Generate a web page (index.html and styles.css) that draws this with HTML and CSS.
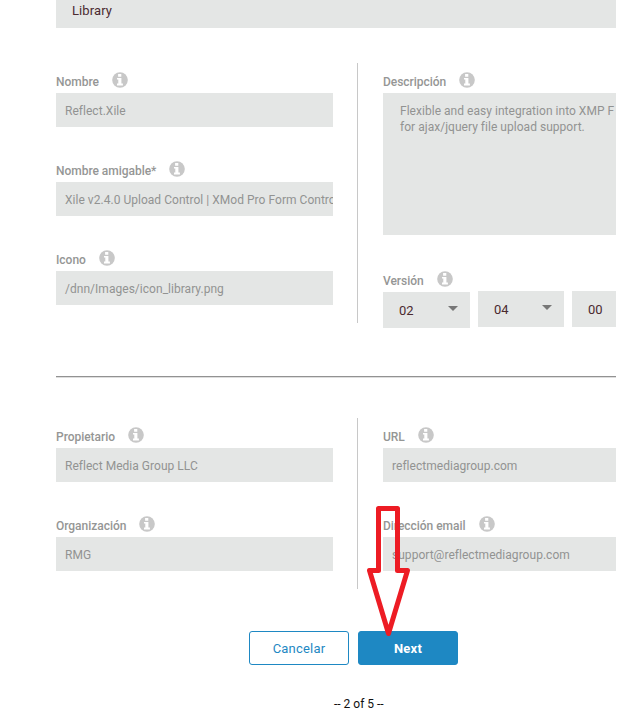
FILE: index.html
```html
<!DOCTYPE html>
<html lang="es">
<head>
<meta charset="utf-8">
<title>Library</title>
<link rel="stylesheet" href="styles.css">
</head>
<body>
<svg class="defs" width="0" height="0" aria-hidden="true">
  <symbol id="info" viewBox="0 0 16 16"><circle cx="8" cy="8" r="7.8" fill="#c8c8c8"/><path fill="#fff" d="M6.1 1.9h3.2v2.9H6.1zM5 5.9h4.4v5.6h1.5v1.9H5v-1.9h1.3V7.6H5z"/></symbol>
</svg>
<main class="page">
  <div class="type">Library</div>
  <section class="section">
    <div class="col left">
      <div class="field"><div class="label"><span>Nombre</span><svg class="info"><use href="#info"/></svg></div><div class="input">Reflect.Xile</div></div>
      <div class="field"><div class="label"><span>Nombre amigable*</span><svg class="info"><use href="#info"/></svg></div><div class="input">Xile v2.4.0 Upload Control | XMod Pro Form Contro</div></div>
      <div class="field"><div class="label"><span>Icono</span><svg class="info"><use href="#info"/></svg></div><div class="input">/dnn/Images/icon_library.png</div></div>
    </div>
    <div class="col right">
      <div class="field description"><div class="label"><span>Descripción</span><svg class="info"><use href="#info"/></svg></div><div class="input area">Flexible and easy integration into XMP F<br>for ajax/jquery file upload support.</div></div>
      <div class="field"><div class="label"><span>Versión</span><svg class="info"><use href="#info"/></svg></div>
        <div class="versions"><div class="select first">02</div><div class="select">04</div><div class="select">00</div></div>
      </div>
    </div>
  </section>
  <hr class="rule">
  <section class="section owner">
    <div class="col left">
      <div class="field"><div class="label"><span>Propietario</span><svg class="info"><use href="#info"/></svg></div><div class="input">Reflect Media Group LLC</div></div>
      <div class="field"><div class="label"><span>Organización</span><svg class="info"><use href="#info"/></svg></div><div class="input">RMG</div></div>
    </div>
    <div class="col right">
      <div class="field"><div class="label"><span>URL</span><svg class="info"><use href="#info"/></svg></div><div class="input">reflectmediagroup.com</div></div>
      <div class="field"><div class="label"><span>Dirección email</span><svg class="info"><use href="#info"/></svg></div><div class="input">support@reflectmediagroup.com</div></div>
    </div>
  </section>
  <div class="actions"><div class="button">Cancelar</div><div class="button primary">Next</div></div>
  <div class="steps">-- 2 of 5 --</div>
</main>
<svg class="arrow" width="46" height="132" viewBox="0 0 46 132"><path d="M12.5 3.5h19v62h10L22.5 128.5 3.5 65.5h9z" fill="none" stroke="#ed1c24" stroke-width="5" stroke-linejoin="round"/></svg>
</body>
</html>
```
FILE: styles.css
```css
* { box-sizing: border-box; }
body { margin: 0; background: #fff; font-family: Roboto, sans-serif; font-size: 12px; position: relative; width: 625px; height: 728px; overflow: hidden; }
.defs { display: block; }
.page { width: 560px; margin-left: 56px; overflow: hidden; }
.type { height: 28px; padding-left: 16px; background: #e4e6e5; color: #4b2a30; font-size: 13px; line-height: 22px; letter-spacing: .1px; }
.section { display: flex; height: 260px; margin-top: 35px; }
.col { flex: none; display: flex; flex-direction: column; gap: 25px; }
.left { width: 302px; padding-right: 24px; border-right: 1px solid #c8c8c8; }
.right { width: 302px; padding-left: 25px; }
.label { display: flex; height: 30px; color: #959695; font-weight: 500; line-height: 38px; letter-spacing: -.03px; white-space: nowrap; }
.info { width: 16px; height: 16px; margin: 9px 0 0 13px; }
.input { height: 34px; padding: 0 0 0 9px; background: #e4e6e5; color: #929392; line-height: 36px; letter-spacing: .03px; white-space: nowrap; overflow: hidden; }
.area { height: 142px; padding: 10px 0 0 17px; line-height: 16px; }
.description { margin-bottom: 2px; }
.versions { display: flex; gap: 8px; }
.select { flex: none; display: flex; justify-content: space-between; width: 86px; height: 36px; margin-top: -1px; padding: 0 12px 0 16px; background: #e4e6e5; color: #4b2a30; font-size: 13px; line-height: 37px; }
.first { width: 87px; margin-top: 0; }
.select::after { content: ""; margin-top: 14px; width: 10px; height: 5px; background: #777; clip-path: polygon(0 0, 100% 0, 50% 100%); }
.rule { height: 2px; margin: 53px 0 0; border: 0; border-top: 1px solid #929292; background: #dedede; }
.owner { height: 171px; margin-top: 40px; }
.actions { display: flex; gap: 9px; margin: 42px 0 0 193px; }
.button { width: 100px; height: 34px; border: 1px solid #1e88c3; border-radius: 3px; color: #1e88c3; font-size: 13px; line-height: 33px; letter-spacing: .2px; text-align: center; }
.primary { background: #1e88c3; color: #fff; font-weight: 700; }
.steps { margin: 31px 0 0 278px; color: #111; line-height: 16px; }
.arrow { position: absolute; left: 366px; top: 505px; }
```
